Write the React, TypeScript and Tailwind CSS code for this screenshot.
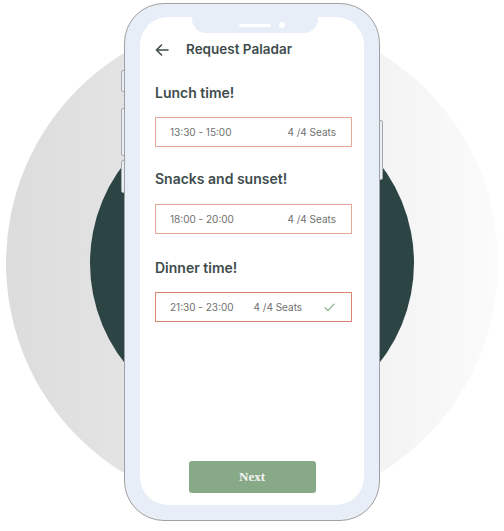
import React from "react";

function BackArrow() {
  return (
    <svg width="14" height="12" viewBox="0 0 14 12" fill="none">
      <path d="M13 6H1.5M6.5 1L1.5 6l5 5" stroke="#3e4c4c" strokeWidth="1.6" strokeLinecap="round" strokeLinejoin="round" />
    </svg>
  );
}

function Check() {
  return (
    <svg width="11" height="9" viewBox="0 0 11 9" fill="none">
      <path d="M1 4.6L4 7.6L10 1.2" stroke="#8aab88" strokeWidth="1.2" strokeLinecap="round" strokeLinejoin="round" />
    </svg>
  );
}

export default function App() {
  const font = { fontFamily: "Inter, 'Noto Sans', sans-serif" };
  return (
    <div className="relative w-[504px] h-[531px] overflow-hidden bg-white" style={font}>
      {/* background circles */}
      <div className="absolute left-[6px] top-[17px] w-[492px] h-[492px] rounded-full bg-gradient-to-r from-[#dcdcdc] to-[#fbfbfb]" />
      <div className="absolute left-[90px] top-[101px] w-[324px] h-[324px] rounded-full bg-[#2c4444]" />

      {/* side buttons */}
      <div className="absolute left-[121px] top-[70px] w-[6px] h-[22px] rounded-l-[2px] border border-[#a8a8a8] bg-[#e8eef8]" />
      <div className="absolute left-[121px] top-[108px] w-[6px] h-[48px] rounded-l-[2px] border border-[#a8a8a8] bg-[#e8eef8]" />
      <div className="absolute left-[121px] top-[160px] w-[6px] h-[33px] rounded-l-[2px] border border-[#a8a8a8] bg-[#e8eef8]" />
      <div className="absolute left-[377px] top-[120px] w-[6px] h-[60px] rounded-r-[2px] border border-[#a8a8a8] bg-[#e8eef8]" />

      <div className="relative flex justify-center pt-[3px]">
        <div className="w-[256px] h-[518px] rounded-[40px] border border-[#a0a0a0] bg-[#e8eef8] pt-[13px] px-[15px] pb-[15px]">
          <div className="relative w-full h-full rounded-[28px] bg-white flex flex-col px-[15px] pb-[12px]">
            {/* notch */}
            <div className="absolute left-[52px] top-0 w-[126px] h-[16px] rounded-b-[14px] bg-[#e8eef8] flex items-center justify-center gap-[8px] pl-[14px]">
              <div className="w-[32px] h-[3px] rounded-full bg-white" />
              <div className="w-[6px] h-[6px] rounded-full bg-white" />
            </div>

            {/* header */}
            <div className="mt-[25px] h-[16px] flex items-center">
              <BackArrow />
              <span className="ml-[17px] text-[13.5px] font-semibold text-[#3e4c4c] leading-none">Request Paladar</span>
            </div>

            <div className="mt-[24px] h-[20px] flex items-center text-[14px] font-semibold text-[#3e4c4c]">Lunch time!</div>
            <div className="mt-[15px] mr-[-3px] h-[30px] border border-[#e6a898] flex items-center justify-between pl-[14px] pr-[15px] text-[10px] text-[#707070]">
              <span>13:30 - 15:00</span>
              <span>4 /4 Seats</span>
            </div>

            <div className="mt-[21px] h-[20px] flex items-center text-[14px] font-semibold text-[#3e4c4c]">Snacks and sunset!</div>
            <div className="mt-[16px] mr-[-3px] h-[30px] border border-[#e6a898] flex items-center justify-between pl-[14px] pr-[15px] text-[10px] text-[#707070]">
              <span>18:00 - 20:00</span>
              <span>4 /4 Seats</span>
            </div>

            <div className="mt-[23px] h-[20px] flex items-center text-[14px] font-semibold text-[#3e4c4c]">Dinner time!</div>
            <div className="mt-[15px] mr-[-3px] h-[30px] border-[1.5px] border-[#da8572] flex items-center pl-[14px] pr-[16px] text-[10px] text-[#707070]">
              <span>21:30 - 23:00</span>
              <span className="ml-[20px]">4 /4 Seats</span>
              <span className="ml-auto"><Check /></span>
            </div>

            <div className="mt-auto flex justify-center">
              <button
                className="w-[127px] h-[32px] rounded-[3px] bg-[#87a987] text-[#f4f4f4] text-[13px] font-bold"
                style={{ fontFamily: "'Liberation Serif', 'DejaVu Serif', serif" }}
              >
                Next
              </button>
            </div>
          </div>
        </div>
      </div>
    </div>
  );
}
